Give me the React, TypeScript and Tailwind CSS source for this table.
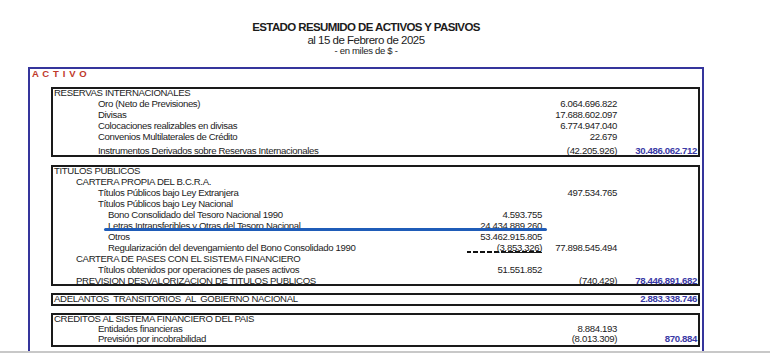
import React from "react";

type RowProps = {
  label: string;
  indent?: number;
  a?: string;
  b?: string;
  c?: string;
  tall?: boolean;
  short?: boolean;
  mark?: boolean;
  dashed?: boolean;
};

const indents = ["pl-[1px]", "pl-[23px]", "pl-[45px]", "pl-[55px]"];

function Row({ label, indent = 0, a, b, c, tall, short, mark, dashed }: RowProps) {
  return (
    <div
      className={
        "relative grid grid-cols-[1fr_75px_75px_80px] pr-[1px] text-[9.6px] tracking-[-0.35px] " +
        (short ? "h-[10px] leading-[10px] " : "h-[11px] leading-[11px] ") +
        (tall ? "mt-[3px]" : "")
      }
    >
      <div className={"whitespace-pre " + indents[indent]}>{label}</div>
      <div
        className={
          "text-right " +
          (dashed
            ? "bg-[linear-gradient(to_right,#111_5px,transparent_5px)] bg-[length:7px_2px] bg-repeat-x bg-bottom"
            : "")
        }
      >
        <span className={dashed ? "underline" : ""}>{a}</span>
      </div>
      <div className="text-right">{b}</div>
      <div className="text-right font-bold text-[#3a3aa6]">{c}</div>
      {mark && (
        <div className="absolute left-[51px] top-[8px] w-[443px] h-[3px] rounded-full bg-[#1f5cb8]" />
      )}
    </div>
  );
}

export default function App() {
  return (
    <div className="flex flex-col w-[770px] h-[353px] bg-white text-[#1c1c1c] font-['Liberation_Sans',Arial,sans-serif] overflow-hidden">
      <div className="flex flex-col flex-1 min-h-0 ml-[28px] w-[676px]">
        <div className="pt-[21px] text-center">
          <div className="text-[11.5px] leading-[13px] font-bold tracking-[-0.6px]">
            ESTADO RESUMIDO DE ACTIVOS Y PASIVOS
          </div>
          <div className="text-[11.5px] leading-[12px] tracking-[-0.5px]">
            al 15 de Febrero de 2025
          </div>
          <div className="text-[9.5px] leading-[10px] tracking-[-0.3px]">- en miles de $ -</div>
        </div>

        <div className="flex-1 mt-[11px] border-2 border-b-0 border-[#35359c]">
          <div className="pl-[2px] text-[9.5px] leading-[9px] font-bold tracking-[0.6px] text-[#c0392b]">
            A C T I V O
          </div>

          <div className="mt-[9px] ml-[21px] mr-[2px] h-[70px] border-2 border-[#1a1a1a]">
            <div className="-mt-[2px]">
              <Row label="RESERVAS INTERNACIONALES" />
              <Row label="Oro (Neto de Previsiones)" indent={2} b="6.064.696.822" />
              <Row label="Divisas" indent={2} b="17.688.602.097" />
              <Row label="Colocaciones realizables en divisas" indent={2} b="6.774.947.040" />
              <Row label="Convenios Multilaterales de Crédito" indent={2} b="22.679" />
              <Row
                label="Instrumentos Derivados sobre Reservas Internacionales"
                indent={2}
                b="(42.205.926)"
                c="30.486.062.712"
                tall
              />
            </div>
          </div>

          <div className="mt-[8px] ml-[21px] mr-[2px] h-[121px] border-2 border-[#1a1a1a]">
            <div className="-mt-[2px]">
              <Row label="TITULOS PUBLICOS" />
              <Row label="CARTERA PROPIA DEL B.C.R.A." indent={1} />
              <Row label="Títulos Públicos bajo Ley Extranjera" indent={2} b="497.534.765" />
              <Row label="Títulos Públicos bajo Ley Nacional" indent={2} />
              <Row label="Bono Consolidado del Tesoro Nacional 1990" indent={3} a="4.593.755" />
              <Row
                label="Letras Intransferibles y Otras del Tesoro Nacional"
                indent={3}
                a="24.434.889.260"
                mark
              />
              <Row label="Otros" indent={3} a="53.462.915.805" />
              <Row
                label="Regularización del devengamiento del Bono Consolidado 1990"
                indent={3}
                a="(3.853.326)"
                b="77.898.545.494"
                dashed
              />
              <Row label="CARTERA DE PASES CON EL SISTEMA FINANCIERO" indent={1} />
              <Row
                label="Títulos obtenidos por operaciones de pases activos"
                indent={2}
                a="51.551.852"
              />
              <Row
                label="PREVISION DESVALORIZACION DE TITULOS PUBLICOS"
                indent={1}
                b="(740.429)"
                c="78.446.891.682"
              />
            </div>
          </div>

          <div className="mt-[7px] ml-[21px] mr-[2px] h-[13px] border-2 border-[#1a1a1a]">
            <div className="-mt-[2px]">
              <Row
                label="ADELANTOS  TRANSITORIOS  AL  GOBIERNO NACIONAL"
                c="2.883.338.746"
              />
            </div>
          </div>

          <div className="mt-[7px] ml-[21px] mr-[2px] h-[34px] border-2 border-[#1a1a1a]">
            <div className="-mt-[1px]">
              <Row label="CREDITOS AL SISTEMA FINANCIERO DEL PAIS" short />
              <Row label="Entidades financieras" indent={2} b="8.884.193" short />
              <Row
                label="Previsión por incobrabilidad"
                indent={2}
                b="(8.013.309)"
                c="870.884"
                short
              />
            </div>
          </div>
        </div>
      </div>
      <div className="h-[2px] bg-[#c8c8c8]" />
    </div>
  );
}
